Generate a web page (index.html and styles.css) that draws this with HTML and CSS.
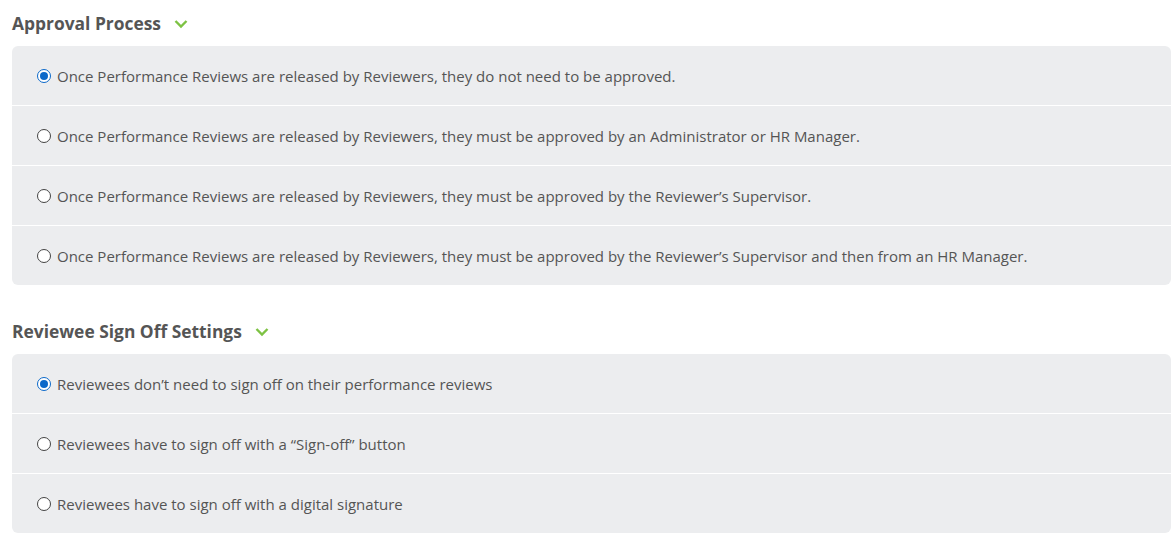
FILE: index.html
```html
<!DOCTYPE html>
<html>
<head>
<meta charset="utf-8">
<link rel="stylesheet" href="styles.css">
</head>
<body>
<section class="group">
  <h2 class="heading">Approval Process <svg class="chev" viewBox="0 0 14 10" width="14" height="10"><path d="M1.5 2 L7 7.5 L12.5 2" fill="none" stroke="#7dc243" stroke-width="2.4"/></svg></h2>
  <div class="panel">
    <label class="row"><span class="radio checked"></span>Once Performance Reviews are released by Reviewers, they do not need to be approved.</label>
    <label class="row"><span class="radio"></span>Once Performance Reviews are released by Reviewers, they must be approved by an Administrator or HR Manager.</label>
    <label class="row"><span class="radio"></span>Once Performance Reviews are released by Reviewers, they must be approved by the Reviewer’s Supervisor.</label>
    <label class="row"><span class="radio"></span>Once Performance Reviews are released by Reviewers, they must be approved by the Reviewer’s Supervisor and then from an HR Manager.</label>
  </div>
</section>
<section class="group second">
  <h2 class="heading">Reviewee Sign Off Settings <svg class="chev" viewBox="0 0 14 10" width="14" height="10"><path d="M1.5 2 L7 7.5 L12.5 2" fill="none" stroke="#7dc243" stroke-width="2.4"/></svg></h2>
  <div class="panel">
    <label class="row"><span class="radio checked"></span>Reviewees don’t need to sign off on their performance reviews</label>
    <label class="row"><span class="radio"></span>Reviewees have to sign off with a “Sign-off” button</label>
    <label class="row"><span class="radio"></span>Reviewees have to sign off with a digital signature</label>
  </div>
</section>
</body>
</html>
```
FILE: styles.css
```css
html, body { margin: 0; padding: 0; background: #fff; }
body {
  font-family: "Open Sans", "Noto Sans", sans-serif;
  color: #555;
  padding: 0 4px 0 12px;
}
.group { display: block; }
.heading {
  margin: 0;
  height: 46px;
  display: flex;
  align-items: center;
  font-size: 17.4px;
  font-weight: 700;
  color: #555;
  box-sizing: border-box;
}
.chev { margin-left: 13px; margin-top: 2px; }
.second { margin-top: 22px; }
.second .heading { height: 47px; }
.panel {
  background: #ecedef;
  border-radius: 6px;
  display: flex;
  flex-direction: column;
}
.row {
  display: flex;
  align-items: center;
  height: 59px;
  padding-left: 25px;
  font-size: 15px;
  border-top: 1px solid #fff;
  box-sizing: content-box;
}
.row:first-child { border-top: none; }
.radio {
  width: 12px;
  height: 12px;
  border: 1px solid #444;
  border-radius: 50%;
  margin-right: 6px;
  background: #fff;
  flex: none;
  box-sizing: content-box;
  position: relative;
}
.radio.checked {
  border-color: #0b68c9;
}
.radio.checked::after {
  content: "";
  position: absolute;
  left: 2px; top: 2px;
  width: 8px; height: 8px;
  border-radius: 50%;
  background: #0b68c9;
}
```
